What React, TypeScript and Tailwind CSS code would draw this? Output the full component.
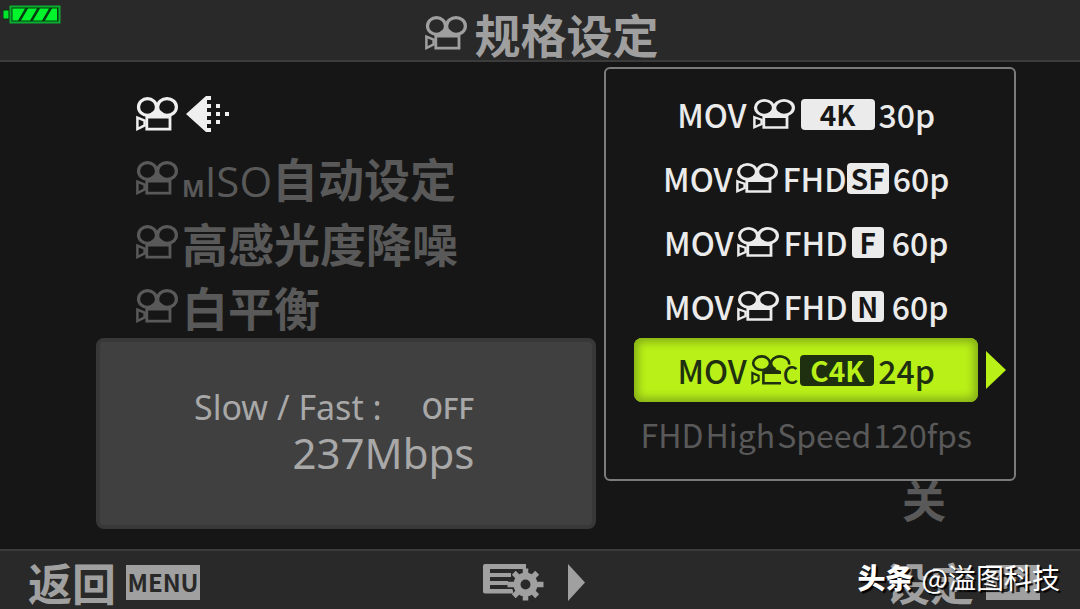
import { useState, type ReactNode } from "react";
import clsx from "clsx";

type IconProps = { className?: string };

const CameraIcon = ({ className }: IconProps) => (
  <svg viewBox="0 0 42 34" preserveAspectRatio="none" fill="none" stroke="currentColor" className={clsx("shrink-0", className)}>
    <ellipse cx="11.5" cy="10" rx="9" ry="8.4" strokeWidth="3.2" />
    <ellipse cx="31" cy="10" rx="9.4" ry="8.4" strokeWidth="3.2" />
    <path d="M13 17.5 21.2 11 29.5 17.5 33 20H10Z" fill="currentColor" stroke="none" />
    <path d="M10.8 20H34V32.2H10.8Z" strokeWidth="2.8" />
    <path d="M1.4 20.6 8.6 23.6V28.4L1.4 32Z" strokeWidth="2.5" />
  </svg>
);

// cinema variant, the right side stays open for the "C"
const CinemaIcon = ({ className }: IconProps) => (
  <svg viewBox="0 0 40 30" fill="none" stroke="currentColor" strokeWidth="2.6" className={clsx("shrink-0", className)}>
    <ellipse cx="10.6" cy="8.2" rx="8.4" ry="6.8" />
    <path d="M38 9.4A9 6.9 0 1 0 24.5 14.2" />
    <path d="M13 14.6 20 11 24 14 30 16V17.5H12Z" fill="currentColor" stroke="none" />
    <path d="M30 17.6H12.4V28.2H30" />
    <path d="M1.4 18 7.6 20.8V25L1.4 28Z" strokeWidth="2.2" />
  </svg>
);

const QualityIcon = () => (
  <svg viewBox="0 0 44 36" fill="currentColor" className="h-9 w-11 shrink-0">
    <path d="M0 18 20 0H25V4H21V8H25V12H21V16H25V20H21V24H25V28H21V32H25V36H20Z" />
    <path d="M30 8h4v4h-4zM30 16h4v4h-4zM30 24h4v4h-4zM39 16h4v4h-4z" />
  </svg>
);

const BatteryIcon = () => (
  <svg viewBox="0 0 58 20" className="h-5 w-[58px] self-start">
    <rect x="0" y="5" width="6" height="9" fill="#00e62e" stroke="#06300c" />
    <rect x="7.5" y="1.5" width="49" height="16" fill="#063d10" stroke="#0cae32" strokeWidth="2" />
    <path d="M9.5 3.5H22L15 15.5H9.5ZM25 3.5H34L27 15.5H18ZM37 3.5H46L39 15.5H30ZM49 3.5H54V15.5H42Z" fill="#00f52c" />
  </svg>
);

const MenuGearIcon = () => (
  <svg viewBox="0 0 61 37" className="h-[37px] w-[61px]" fill="currentColor">
    <path d="M2 0H43V5H7V9H28V13H7V17H25V21H7V25H30V29.5H2Q0 29.5 0 27.5V2Q0 0 2 0Z" />
    <circle cx="42.5" cy="20.5" r="14" fill="#292929" />
    <circle cx="42.5" cy="20.5" r="8.5" fill="none" stroke="currentColor" strokeWidth="7" />
    <path
      d="M42.5 4.5V9M42.5 32V36.5M24.5 20.5H31M54 20.5H60.5M30.8 8.8 34.5 12.5M50.5 28.5 54.2 32.2M30.8 32.2 34.5 28.5M50.5 12.5 54.2 8.8"
      stroke="currentColor"
      strokeWidth="5.5"
    />
  </svg>
);

const ArrowIcon = ({ className }: IconProps) => (
  <svg viewBox="0 0 18 38" preserveAspectRatio="none" fill="currentColor" className={className}>
    <path d="M0 0 18 19 0 38Z" />
  </svg>
);

const Badge = ({ children, className }: { children: ReactNode; className: string }) => (
  <span className={clsx("flex h-[31px] items-center justify-center rounded-sm text-[28px] font-bold", className)}>{children}</span>
);

const LIGHT = "bg-[#ebebeb] text-[#161616]";

const options = [
  {
    id: "4k",
    label: <>MOV<CameraIcon className="mx-1.5 h-[30px] w-[42px]" /><Badge className={clsx(LIGHT, "w-[74px]")}>4K</Badge><span className="ml-1">30p</span></>,
  },
  {
    id: "sf",
    label: <>MOV<CameraIcon className="mx-1 h-[30px] w-[42px]" />FHD<Badge className={clsx(LIGHT, "w-[42px]")}>SF</Badge><span className="ml-1">60p</span></>,
  },
  {
    id: "f",
    label: <>MOV<CameraIcon className="mx-1 h-[30px] w-[42px]" />FHD<Badge className={clsx(LIGHT, "mx-1 w-8")}>F</Badge><span className="ml-1">60p</span></>,
  },
  {
    id: "n",
    label: <>MOV<CameraIcon className="mx-1 h-[30px] w-[42px]" />FHD<Badge className={clsx(LIGHT, "mx-1 w-8")}>N</Badge><span className="ml-1">60p</span></>,
  },
  {
    id: "c4k",
    label: (
      <>
        MOV
        <CinemaIcon className="ml-1 h-[30px] w-10" />
        <span className="mt-2 -ml-2 text-2xl leading-none">C</span>
        <Badge className="ml-0.5 w-[74px] bg-[#1f3010] text-[#b9f018]">C4K</Badge>
        <span className="ml-1">24p</span>
      </>
    ),
  },
];

const MenuRow = ({ active, children }: { active?: boolean; children: ReactNode }) => (
  <button type="button" className={clsx("flex h-16 items-center gap-1 pl-10 whitespace-nowrap", active ? "text-[#efefef]" : "text-[#595959]")}>
    <CameraIcon className="h-[34px] w-[42px]" />
    {children}
  </button>
);

const App = () => {
  const [selected, setSelected] = useState("c4k");

  return (
    <div className="flex min-h-screen flex-col overflow-hidden bg-[#161616] font-['Noto_Sans_CJK_SC',sans-serif]">
      {/* Title Bar */}
      <header className="grid h-[62px] grid-cols-[1fr_auto_1fr] border-b-2 border-[#3c3c3c] bg-[#292929] pt-[5px] pl-[3px] text-[#9f9f9f]">
        <BatteryIcon />
        <h1 className="flex items-center gap-2 text-[46px] leading-none font-bold">
          <CameraIcon className="h-[34px] w-[42px]" />
          规格设定
        </h1>
      </header>

      <main className="grid grow grid-cols-[501fr_412fr] gap-2 pr-16 pl-24">
        {/* Settings */}
        <section className="flex flex-col pt-5">
          <nav className="flex flex-col text-[46px] leading-none font-bold">
            <MenuRow active><span className="ml-1"><QualityIcon /></span></MenuRow>
            <MenuRow>
              <span className="flex items-baseline">
                <span className="font-['Open_Sans',sans-serif] text-2xl leading-none">M</span>
                <span className="font-['Open_Sans',sans-serif] text-[42px] leading-none font-normal">ISO</span>
                自动设定
              </span>
            </MenuRow>
            <MenuRow>高感光度降噪</MenuRow>
            <MenuRow>白平衡</MenuRow>
          </nav>
          <div className="flex h-[191px] flex-col items-end justify-center rounded-lg border-4 border-[#383838] bg-[#404040] pr-[118px] pb-2 font-['Noto_Sans',sans-serif] text-[#a8a8a8]">
            <p className="flex items-center gap-10 text-[34px] leading-[46px] whitespace-pre">
              <span>Slow / Fast :</span>
              <span className="font-['Noto_Sans_CJK_SC',sans-serif] text-[28px] font-medium">OFF</span>
            </p>
            <p className="text-[42px] leading-[46px]">237Mbps</p>
          </div>
        </section>

        {/* Format Popup */}
        <section className="flex flex-col pt-[5px]">
          <div className="relative z-10 flex flex-col rounded-md border-2 border-[#7b7b7b] bg-[#161616] py-[13px] pr-9 pl-7 text-[32px] leading-none">
            {options.map((option) => (
              <button
                key={option.id}
                type="button"
                onClick={() => setSelected(option.id)}
                className={clsx(
                  "relative flex h-16 items-center justify-center font-medium whitespace-nowrap",
                  selected === option.id
                    ? "rounded-lg bg-[#b9f018] text-[#1f3010] shadow-[inset_0_0_8px_4px_#85ad17]"
                    : "text-[#ebebeb]"
                )}
              >
                {option.label}
                {selected === option.id && <ArrowIcon className="absolute -right-7 h-[38px] w-5 text-[#b9f018]" />}
              </button>
            ))}
            <button type="button" disabled className="flex h-16 items-center justify-center gap-0.5 whitespace-nowrap text-[#595959]">
              <span>FHD</span>
              <span>High</span>
              <span>Speed</span>
              <span>120fps</span>
            </button>
          </div>
          <span className="-mt-1 mr-[70px] self-end text-[44px] leading-none font-bold text-[#595959]">关</span>
        </section>
      </main>

      {/* Button Guide */}
      <footer className="relative grid h-[60px] grid-cols-[1fr_auto_1fr] items-center border-t-2 border-[#3c3c3c] bg-[#292929] pt-1 pr-10 pl-7 text-[44px] leading-none font-bold text-[#a0a0a0]">
        <button type="button" className="flex items-center gap-2.5 justify-self-start">
          返回
          <span className="flex h-[35px] w-[74px] items-center justify-center bg-[#a0a0a0] text-2xl text-[#292929]">MENU</span>
        </button>
        <button type="button" aria-label="菜单" className="flex items-center gap-6">
          <MenuGearIcon />
          <ArrowIcon className="h-[37px] w-[17px]" />
        </button>
        <button type="button" className="flex items-center gap-3 justify-self-end">
          设定
          <span className="flex h-[35px] w-[54px] items-center justify-center bg-[#a0a0a0] text-2xl text-[#292929]">OK</span>
        </button>
        <p className="absolute right-5 bottom-4 flex gap-2 text-[28px] leading-8 font-normal text-white [text-shadow:2px_2px_1px_#000]">
          <span className="font-black">头条</span>
          <span>@溢图科技</span>
        </p>
      </footer>
    </div>
  );
};

export default App;
